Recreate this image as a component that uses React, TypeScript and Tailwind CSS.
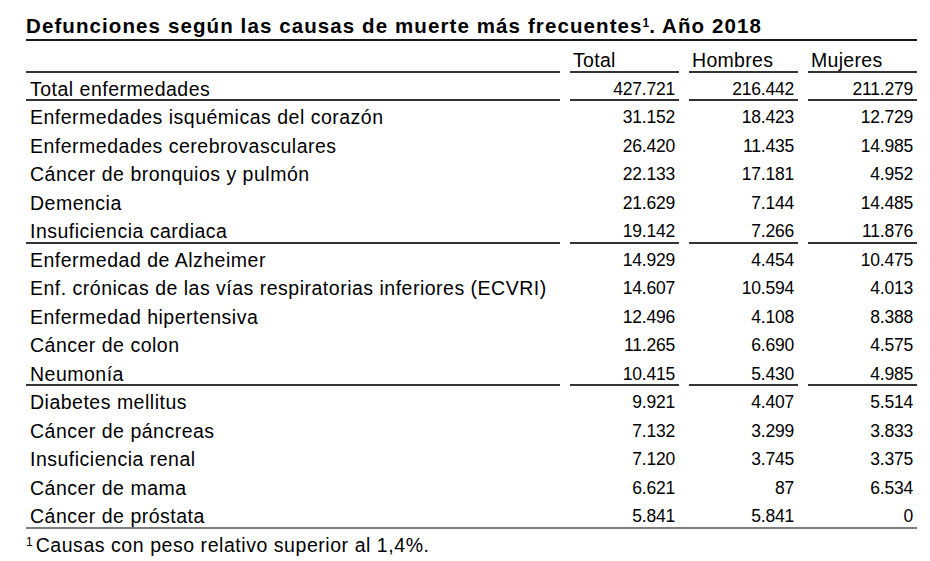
import React from 'react';

type Row = {
  label: string;
  total: string;
  hombres: string;
  mujeres: string;
  line?: 'cells' | 'full';
};

const rows: Row[] = [
  { label: 'Total enfermedades', total: '427.721', hombres: '216.442', mujeres: '211.279', line: 'cells' },
  { label: 'Enfermedades isquémicas del corazón', total: '31.152', hombres: '18.423', mujeres: '12.729' },
  { label: 'Enfermedades cerebrovasculares', total: '26.420', hombres: '11.435', mujeres: '14.985' },
  { label: 'Cáncer de bronquios y pulmón', total: '22.133', hombres: '17.181', mujeres: '4.952' },
  { label: 'Demencia', total: '21.629', hombres: '7.144', mujeres: '14.485' },
  { label: 'Insuficiencia cardiaca', total: '19.142', hombres: '7.266', mujeres: '11.876', line: 'cells' },
  { label: 'Enfermedad de Alzheimer', total: '14.929', hombres: '4.454', mujeres: '10.475' },
  { label: 'Enf. crónicas de las vías respiratorias inferiores (ECVRI)', total: '14.607', hombres: '10.594', mujeres: '4.013' },
  { label: 'Enfermedad hipertensiva', total: '12.496', hombres: '4.108', mujeres: '8.388' },
  { label: 'Cáncer de colon', total: '11.265', hombres: '6.690', mujeres: '4.575' },
  { label: 'Neumonía', total: '10.415', hombres: '5.430', mujeres: '4.985', line: 'cells' },
  { label: 'Diabetes mellitus', total: '9.921', hombres: '4.407', mujeres: '5.514' },
  { label: 'Cáncer de páncreas', total: '7.132', hombres: '3.299', mujeres: '3.833' },
  { label: 'Insuficiencia renal', total: '7.120', hombres: '3.745', mujeres: '3.375' },
  { label: 'Cáncer de mama', total: '6.621', hombres: '87', mujeres: '6.534' },
  { label: 'Cáncer de próstata', total: '5.841', hombres: '5.841', mujeres: '0', line: 'full' },
];

function DataRow({ row }: { row: Row }) {
  const cellLine = row.line === 'cells' ? 'border-b-2 border-[#333]' : '';
  const rowLine = row.line === 'full' ? 'border-b-2 border-[#7d7d7d]' : '';
  const num = `h-[28.5px] pt-[5px] pr-[4px] text-right text-[17.5px] leading-[23.5px] tracking-[-0.2px] ${cellLine}`;

  return (
    <div className={`grid h-[28.5px] grid-cols-[534px_109px_109px_109px] gap-x-[10px] ${rowLine}`}>
      <div className={`h-[28.5px] pt-[5px] pl-[4px] text-[19.5px] leading-[23.5px] tracking-[0.5px] whitespace-nowrap ${cellLine}`}>
        {row.label}
      </div>
      <div className={num}>{row.total}</div>
      <div className={num}>{row.hombres}</div>
      <div className={num}>{row.mujeres}</div>
    </div>
  );
}

export default function App() {
  const head = 'h-[32px] border-b-2 border-[#333] pt-[8px] pl-[3px] text-[19.5px] leading-[23px] tracking-[0.3px]';

  return (
    <div className="h-[561px] w-[930px] overflow-hidden bg-white font-['Liberation_Sans',Arial,sans-serif] text-black">
      <div className="w-[917px] pl-[26px]">
        {/* Title */}
        <div className="h-[40.5px] border-b-2 border-[#1a1a1a] pt-[14px] text-[20.5px] font-bold leading-[24px] tracking-[1.1px] whitespace-nowrap">
          Defunciones según las causas de muerte más frecuentes
          <sup className="text-[12px] tracking-normal">1</sup>. Año 2018
        </div>

        {/* Header */}
        <div className="grid grid-cols-[534px_109px_109px_109px] gap-x-[10px]">
          <div className={head}></div>
          <div className={head}>Total</div>
          <div className={head}>Hombres</div>
          <div className={head}>Mujeres</div>
        </div>

        {/* Body */}
        {rows.map((row) => (
          <DataRow key={row.label} row={row} />
        ))}

        {/* Footnote */}
        <div className="pt-[5px] text-[19.5px] leading-[23px] tracking-[0.55px] whitespace-nowrap">
          <sup className="mr-[3px] text-[12px] tracking-normal">1</sup>
          Causas con peso relativo superior al 1,4%.
        </div>
      </div>
    </div>
  );
}
